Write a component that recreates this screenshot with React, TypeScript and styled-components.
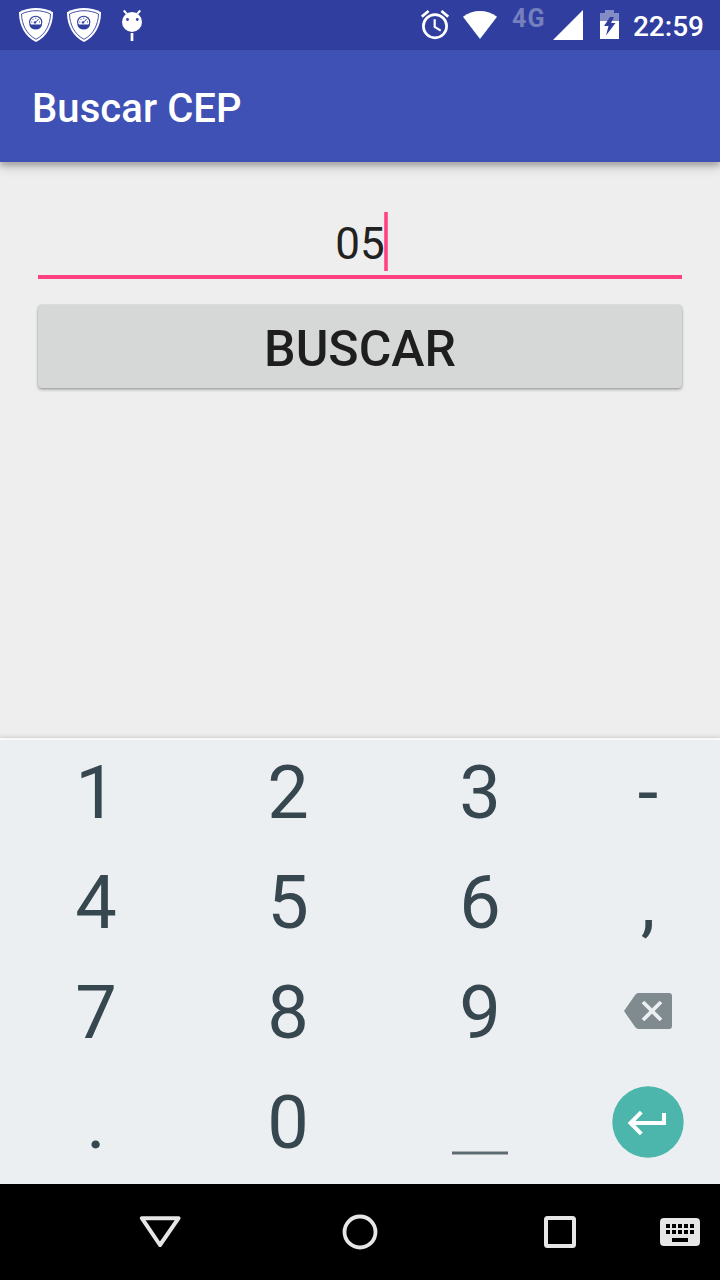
import React from "react";
import styled, { createGlobalStyle } from "styled-components";

const GlobalStyle = createGlobalStyle`
  * { box-sizing: border-box; }
  body { margin: 0; font-family: Roboto, "Liberation Sans", sans-serif; }
  svg { display: block; flex: none; }
`;

const Screen = styled.div`
  width: 720px;
  height: 1280px;
  display: flex;
  flex-direction: column;
  background: #eeeeee;
  overflow: hidden;
`;

const StatusBar = styled.header`
  height: 50px;
  flex: none;
  display: flex;
  justify-content: space-between;
  background: #303f9f;
  color: #fff;
`;

const Notifications = styled.div`
  display: flex;
  gap: 14px;
  padding: 8px 0 0 19px;
`;

const SystemIcons = styled.div`
  display: flex;
  align-items: flex-start;
  padding-right: 16px;
`;

const Slot = styled.div<{ $top?: number; $left?: number; $right?: number }>`
  padding-top: ${(p) => p.$top ?? 0}px;
  margin-left: ${(p) => p.$left ?? 0}px;
  margin-right: ${(p) => p.$right ?? 0}px;
`;

const Network = styled.span`
  width: 34px;
  margin-right: 7px;
  padding-top: 5px;
  font-size: 25px;
  line-height: 28px;
  font-weight: 700;
  letter-spacing: 1.2px;
  color: #7680bf;
`;

const Clock = styled.span`
  font-size: 28px;
  line-height: 53px;
  font-weight: 500;
`;

const AppBar = styled.div`
  height: 112px;
  flex: none;
  display: flex;
  align-items: center;
  padding: 6px 32px 0;
  background: #3f51b5;
  box-shadow: 0 4px 5px rgba(0, 0, 0, 0.2), 0 7px 10px rgba(0, 0, 0, 0.12);
`;

const Title = styled.h1`
  margin: 0;
  font-size: 40px;
  line-height: 48px;
  font-weight: 500;
  letter-spacing: 0.08px;
  color: #fff;
`;

const Form = styled.main`
  height: 576px;
  flex: none;
  display: flex;
  flex-direction: column;
  padding: 50px 38px 0;
`;

const Field = styled.div`
  height: 67px;
  display: flex;
  justify-content: center;
  align-items: flex-start;
  border-bottom: 4px solid #ff4081;
  font-size: 44px;
  line-height: 65px;
  color: #212121;
`;

const Caret = styled.span`
  width: 4px;
  height: 59px;
  margin-left: -1px;
  margin-right: -3px;
  background: linear-gradient(90deg, #ff79a6, #ff4081 35%, #ff4081 65%, #ff79a6);
`;

const SearchButton = styled.button`
  height: 83px;
  margin: 26px 0 0;
  padding: 5px 0 0;
  border: 0;
  border-radius: 4px;
  background: #d6d8d7;
  box-shadow: 0 0 1px 1px rgba(0, 0, 0, 0.08), 0 2px 3px rgba(0, 0, 0, 0.25);
  font: 500 50px/60px Roboto, "Liberation Sans", sans-serif;
  color: #1e1e1e;
`;

const Keyboard = styled.section`
  height: 446px;
  flex: none;
  display: grid;
  grid-template-columns: repeat(3, 192px) 144px;
  grid-template-rows: repeat(4, 110px);
  background: #eceff1;
  box-shadow: inset 0 2px #f7f9fa, 0 -1px 4px rgba(0, 0, 0, 0.15);
`;

const Key = styled.div`
  display: flex;
  align-items: center;
  justify-content: center;
  font-size: 74px;
  line-height: 110px;
  color: #37474f;
`;

const SpaceMark = styled.span`
  width: 56px;
  height: 4px;
  margin-top: 60px;
  border: solid #a5aeb2;
  border-width: 1px 0;
  background: #5c6a71;
`;

const DeleteKey = styled.span`
  margin-bottom: 4px;
`;

const EnterKey = styled.span`
  margin-top: -2px;
`;

const NavBar = styled.nav`
  height: 96px;
  flex: none;
  display: grid;
  grid-template-columns: 60px 200px 200px 200px 40px;
  align-items: center;
  justify-items: center;
  background: #000;
`;

const NavSpacer = styled.span``;

const Shield = () => (
  <svg width="34" height="34" viewBox="0 0 34 34">
    <path d="M17 0C22.5 0 29 1.4 34 4.2C34.2 16.5 28.5 28.5 17 34C5.500 28.500 -.2 16.500 0 4.200C5 1.400 11.500 0 17 0Z" fill="#fff" />
    <path d="M17 2.700C22 2.700 27.500 3.900 31.500 6C31.300 16 26.700 26.300 17 31.300C7.300 26.300 2.700 16 2.500 6C6.500 3.900 12 2.700 17 2.700Z" fill="none" stroke="#303f9f" strokeWidth=".9" />
    <circle cx="16.700" cy="14.300" r="6.100" fill="#fff" stroke="#303f9f" strokeWidth="1.100" />
    <path d="M10.300 16.600H23.100A6.600 6.600 0 0 1 10.300 16.600Z" fill="#303f9f" />
    <path d="M16.200 14.500L19.800 10.900M12.300 14h1M13.500 11l.9.900M16.700 9.700v1M20 14h1" stroke="#303f9f" strokeWidth="1" />
    <circle cx="16" cy="14.400" r="1.200" fill="#303f9f" />
  </svg>
);

const Droid = () => (
  <svg width="22" height="33" viewBox="0 0 22 33">
    <path d="M2.700 2.500L6 6M19.300 2.500L16 6" stroke="#fff" strokeWidth="1.900" />
    <circle cx="11" cy="14" r="10" fill="#fff" />
    <circle cx="6.500" cy="11.500" r="1.400" fill="#303f9f" />
    <circle cx="16.300" cy="11.500" r="1.400" fill="#303f9f" />
    <path d="M11 25v8" stroke="#fff" strokeWidth="2.700" />
  </svg>
);

const Alarm = () => (
  <svg width="28" height="30" viewBox="0 0 28 30" fill="none" stroke="#fff">
    <circle cx="14" cy="16.200" r="11.600" strokeWidth="2.700" />
    <path d="M.8 6.600L7.600 1M27.200 6.600L20.400 1" strokeWidth="2.700" />
    <path d="M13.700 9.300V17l6 3.600" strokeWidth="2.200" />
  </svg>
);

const Wifi = () => (
  <svg width="34" height="28" viewBox="0 0 34 28">
    <path d="M0 5.800Q7.500 0 17 0T34 5.800L17 28Z" fill="#fff" />
  </svg>
);

const Signal = () => (
  <svg width="30" height="30" viewBox="0 0 30 30">
    <path d="M30 0V30H0Z" fill="#fff" />
  </svg>
);

const Battery = () => (
  <svg width="19" height="29" viewBox="0 0 19 29">
    <path d="M0 3H5V0H14V3H19V11H0Z" fill="#838cc5" />
    <path d="M0 11H19V29H0Z" fill="#fff" />
    <path d="M10 7L4 16H8.500L6 25.500L15.500 13H11L14 7Z" fill="#303f9f" />
  </svg>
);

const Backspace = () => (
  <svg width="48" height="36" viewBox="0 0 48 36">
    <path d="M14.500 0H45Q48 0 48 3V33Q48 36 45 36H14.500Q12.500 36 11.300 34.300L0 18L11.300 1.700Q12.500 0 14.500 0Z" fill="#808b8f" />
    <path d="M19 9L37 27M37 9L19 27" stroke="#eceff1" strokeWidth="3.800" />
  </svg>
);

const Enter = () => (
  <svg width="72" height="72" viewBox="0 0 72 72" fill="none" stroke="#fff" strokeWidth="4">
    <circle cx="36" cy="36" r="35.700" fill="#4db6ac" stroke="none" />
    <path d="M52 27V37H19" />
    <path d="M29.300 26.200L18.500 37L29.300 47.800" />
  </svg>
);

const Back = () => (
  <svg width="42" height="32" viewBox="0 0 42 32">
    <path d="M2.800 2.200H39.600L21 29Z" fill="none" stroke="#e6e6e6" strokeWidth="4" strokeLinejoin="round" />
  </svg>
);

const Home = () => (
  <svg width="36" height="36" viewBox="0 0 36 36">
    <circle cx="18" cy="18" r="15.500" fill="none" stroke="#e6e6e6" strokeWidth="3.800" />
  </svg>
);

const Recents = () => (
  <svg width="32" height="32" viewBox="0 0 32 32">
    <rect x="2" y="2" width="28" height="28" rx="1.500" fill="none" stroke="#e6e6e6" strokeWidth="4" />
  </svg>
);

const KeyboardIcon = () => (
  <svg width="40" height="28" viewBox="0 0 40 28">
    <rect width="40" height="28" rx="4" fill="#e6e6e6" />
    {[6, 12].map((y) =>
      [6, 12, 18, 24, 30].map((x) => <rect key={`${x}-${y}`} x={x} y={y} width="4" height="4" />)
    )}
    <rect x="12" y="20" width="16" height="4" />
  </svg>
);

const keys: React.ReactNode[] = [
  "1", "2", "3", "-",
  "4", "5", "6", ",",
  "7", "8", "9", <DeleteKey><Backspace /></DeleteKey>,
  ".", "0", <SpaceMark />, <EnterKey><Enter /></EnterKey>,
];

export default function App() {
  return (
    <Screen>
      <GlobalStyle />
      <StatusBar>
        <Notifications>
          <Shield />
          <Shield />
          <Slot $left={6}><Droid /></Slot>
        </Notifications>
        <SystemIcons>
          <Slot $top={10} $right={14}><Alarm /></Slot>
          <Slot $top={11} $right={15}><Wifi /></Slot>
          <Network>4G</Network>
          <Slot $top={10} $right={17}><Signal /></Slot>
          <Slot $top={10} $right={14}><Battery /></Slot>
          <Clock>22:59</Clock>
        </SystemIcons>
      </StatusBar>
      <AppBar>
        <Title>Buscar CEP</Title>
      </AppBar>
      <Form>
        <Field>
          <span>05</span>
          <Caret />
        </Field>
        <SearchButton>BUSCAR</SearchButton>
      </Form>
      <Keyboard>
        {keys.map((key, index) => (
          <Key key={index}>{key}</Key>
        ))}
      </Keyboard>
      <NavBar>
        <NavSpacer />
        <Back />
        <Home />
        <Recents />
        <KeyboardIcon />
      </NavBar>
    </Screen>
  );
}
